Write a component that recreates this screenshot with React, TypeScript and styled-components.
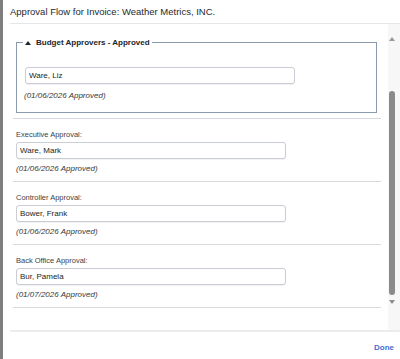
import React from "react";
import styled, { createGlobalStyle } from "styled-components";

const GlobalStyle = createGlobalStyle`
  body {
    margin: 0;
    background: #ffffff;
    font-family: "Liberation Sans", Arial, sans-serif;
  }
`;

const Frame = styled.div`
  display: flex;
  flex-direction: column;
  width: 400px;
  height: 359px;
  box-sizing: border-box;
  border-left: 3px solid #7e7e7e;
  background: #ffffff;
  overflow: hidden;
`;

const Header = styled.div`
  margin-left: 7px;
  padding: 6px 0 6px 0;
  border-bottom: 1px solid #e6e6e6;
`;

const Title = styled.h1`
  margin: 0;
  font-size: 9.5px;
  line-height: 11px;
  font-weight: normal;
  color: #26292c;
`;

const Body = styled.div`
  display: flex;
  flex: 1;
  min-height: 0;
`;

const Content = styled.div`
  flex: 1;
  display: flex;
  flex-direction: column;
  padding: 13px 6px 0 10px;
`;

const Group = styled.fieldset`
  margin: 0 4px 5px 3px;
  padding: 16px 8px 11px 8px;
  border: 1px solid #8a99ab;
`;

const Legend = styled.legend`
  display: flex;
  align-items: center;
  margin-left: -2px;
  padding: 0 2px;
  font-size: 8px;
  line-height: 11px;
  font-weight: bold;
  color: #22252a;
`;

const Caret = styled.span`
  width: 0;
  height: 0;
  margin-right: 5px;
  border-left: 3px solid transparent;
  border-right: 3px solid transparent;
  border-bottom: 4px solid #22252a;
`;

const Section = styled.div<{ $last?: boolean }>`
  display: flex;
  flex-direction: column;
  padding: 11px 0 7px 3px;
  border-top: 1px solid #d9d9d9;
  border-bottom: ${(p) => (p.$last ? "1px solid #d9d9d9" : "none")};
`;

const Label = styled.label`
  font-size: 7.5px;
  line-height: 9px;
  color: #3d4146;
  margin-bottom: 3px;
`;

const Field = styled.input`
  box-sizing: border-box;
  width: 270px;
  height: 17px;
  margin: 0;
  padding: 0 3px;
  border: 1px solid #c9ced4;
  border-radius: 3px;
  box-shadow: 0 1px 1px rgba(0, 0, 0, 0.06);
  background: #ffffff;
  font-family: "Liberation Sans", Arial, sans-serif;
  font-size: 8px;
  color: #1c1d20;
  outline: none;
`;

const Status = styled.div`
  margin-top: 5px;
  font-size: 8px;
  line-height: 10px;
  font-style: italic;
  color: #33373c;
`;

const GroupStatus = styled(Status)`
  margin-top: 7px;
  margin-left: -1px;
`;

const ScrollBar = styled.div`
  width: 11px;
  margin-left: 1px;
  display: flex;
  flex-direction: column;
  padding: 13px 0 0 1px;
  background: #f7f7f7;
`;

const Arrow = styled.span<{ $down?: boolean }>`
  width: 0;
  height: 0;
  border-left: 3px solid transparent;
  border-right: 3px solid transparent;
  border-bottom: ${(p) => (p.$down ? "none" : "4px solid #9a9a9a")};
  border-top: ${(p) => (p.$down ? "4px solid #8c8c8c" : "none")};
`;

const Thumb = styled.div`
  width: 6px;
  height: 204px;
  margin: 50px 0 5px 0;
  border-radius: 3px;
  background: #8a8a8a;
`;

const Footer = styled.div`
  display: flex;
  justify-content: flex-end;
  height: 16px;
  margin-left: 7px;
  padding: 11px 6px 0 0;
  box-sizing: content-box;
  border-top: 2px solid #ececec;
`;

const Done = styled.button`
  border: none;
  background: none;
  padding: 0;
  height: 10px;
  font-family: "Liberation Sans", Arial, sans-serif;
  font-size: 8px;
  line-height: 10px;
  font-weight: bold;
  color: #3f6fd6;
  cursor: pointer;
`;

const approvals = [
  { label: "Executive Approval:", name: "Ware, Mark", date: "01/06/2026" },
  { label: "Controller Approval:", name: "Bower, Frank", date: "01/06/2026" },
  { label: "Back Office Approval:", name: "Bur, Pamela", date: "01/07/2026" },
];

export default function App() {
  return (
    <>
      <GlobalStyle />
      <Frame>
        <Header>
          <Title>Approval Flow for Invoice: Weather Metrics, INC.</Title>
        </Header>
        <Body>
          <Content>
            <Group>
              <Legend>
                <Caret />
                Budget Approvers - Approved
              </Legend>
              <Field readOnly value="Ware, Liz" />
              <GroupStatus>(01/06/2026 Approved)</GroupStatus>
            </Group>
            {approvals.map((a, i) => (
              <Section key={a.label} $last={i === approvals.length - 1}>
                <Label>{a.label}</Label>
                <Field readOnly value={a.name} />
                <Status>({a.date} Approved)</Status>
              </Section>
            ))}
          </Content>
          <ScrollBar>
            <Arrow />
            <Thumb />
            <Arrow $down />
          </ScrollBar>
        </Body>
        <Footer>
          <Done>Done</Done>
        </Footer>
      </Frame>
    </>
  );
}
